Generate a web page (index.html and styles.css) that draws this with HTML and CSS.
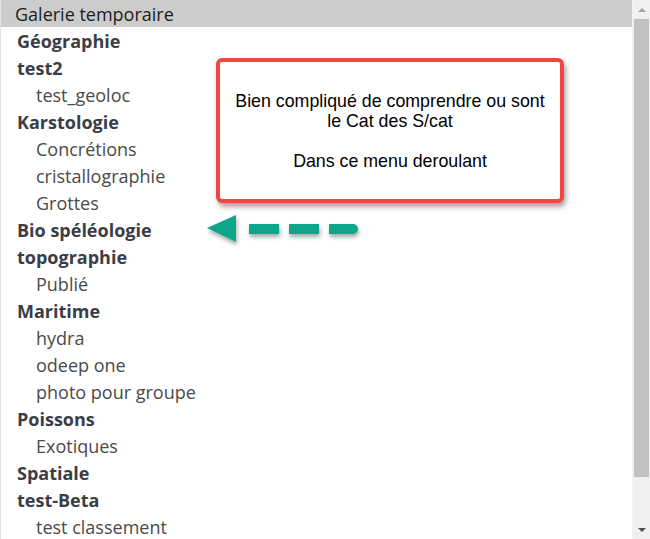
FILE: index.html
```html
<!DOCTYPE html>
<html lang="fr">
<head>
<meta charset="utf-8">
<link rel="stylesheet" href="styles.css">
</head>
<body>
<div class="listbox">
  <ul class="options">
    <li class="opt selected">Galerie temporaire</li>
    <li class="opt group">Géographie</li>
    <li class="opt group">test2</li>
    <li class="opt child">test_geoloc</li>
    <li class="opt group">Karstologie</li>
    <li class="opt child">Concrétions</li>
    <li class="opt child">cristallographie</li>
    <li class="opt child">Grottes</li>
    <li class="opt group">Bio spéléologie</li>
    <li class="opt group">topographie</li>
    <li class="opt child">Publié</li>
    <li class="opt group">Maritime</li>
    <li class="opt child">hydra</li>
    <li class="opt child">odeep one</li>
    <li class="opt child">photo pour groupe</li>
    <li class="opt group">Poissons</li>
    <li class="opt child">Exotiques</li>
    <li class="opt group">Spatiale</li>
    <li class="opt group">test-Beta</li>
    <li class="opt child">test classement</li>
  </ul>
  <div class="scrollbar">
    <div class="arrow up"></div>
    <div class="track"><div class="thumb"></div></div>
    <div class="arrow down"></div>
  </div>
</div>

<div class="callout">
  <p>Bien compliqué de comprendre ou sont<br>le Cat des S/cat</p>
  <p>Dans ce menu deroulant</p>
</div>

<svg class="pointer" width="160" height="40" viewBox="0 0 160 40">
  <defs>
    <filter id="sh" x="-10%" y="-30%" width="130%" height="180%">
      <feDropShadow dx="1" dy="3" stdDeviation="2" flood-color="#000" flood-opacity="0.35"/>
    </filter>
  </defs>
  <g filter="url(#sh)" fill="#0ba688">
    <polygon points="2,14 31,1 31,28"/>
    <rect x="44" y="10" width="30" height="10"/>
    <rect x="84" y="10" width="30" height="10"/>
    <rect x="124" y="10" width="29" height="10" rx="5"/>
    <rect x="124" y="10" width="10" height="10"/>
  </g>
</svg>
</body>
</html>
```

FILE: styles.css
```css
html, body {
  margin: 0;
  padding: 0;
  background: #ffffff;
}
body {
  width: 650px;
  height: 539px;
  overflow: hidden;
  position: relative;
  font-family: "Open Sans", "Noto Sans", sans-serif;
}
.listbox {
  display: flex;
  width: 650px;
  height: 539px;
  box-sizing: border-box;
  border-left: 1px solid #e2e2e2;
}
.options {
  flex: 1;
  list-style: none;
  margin: 0;
  padding: 0;
  overflow: hidden;
}
.opt {
  box-sizing: border-box;
  height: 27px;
  padding-top: 2px;
  line-height: 25px;
  font-size: 18px;
  color: #444;
  white-space: nowrap;
}
.selected {
  background: #cccccc;
  color: #1c1c1c;
  padding-left: 14px;
}
.group {
  font-weight: 700;
  padding-left: 16px;
  color: #3b3d46;
}
.child {
  padding-left: 35px;
  color: #4a4a4a;
}
.scrollbar {
  width: 17px;
  background: #f0f0f0;
  display: flex;
  flex-direction: column;
  border-left: 1px solid #f4f4f4;
}
.arrow {
  height: 19px;
  display: flex;
  align-items: center;
  justify-content: center;
}
.arrow::before {
  content: "";
  width: 0;
  height: 0;
  border-left: 4px solid transparent;
  border-right: 4px solid transparent;
}
.arrow.up::before {
  border-bottom: 4px solid #a3a3a3;
}
.arrow.down::before {
  border-top: 4px solid #505050;
}
.track {
  flex: 1;
  padding: 0 1px;
}
.thumb {
  height: 458px;
  background: #c1c1c1;
}
.callout {
  position: absolute;
  left: 216px;
  top: 58px;
  width: 348px;
  height: 145px;
  box-sizing: border-box;
  border: 4px solid #f44545;
  border-radius: 6px;
  background: #fff;
  box-shadow: 2px 4px 5px rgba(0, 0, 0, 0.35);
  font-family: "Liberation Sans", Arial, sans-serif;
  font-size: 17.8px;
  line-height: 20px;
  color: #000;
  text-align: center;
  display: flex;
  flex-direction: column;
  justify-content: center;
  gap: 20px;
  padding-top: 0;
}
.callout p {
  margin: 0;
}
.pointer {
  position: absolute;
  left: 205px;
  top: 214px;
}
```
